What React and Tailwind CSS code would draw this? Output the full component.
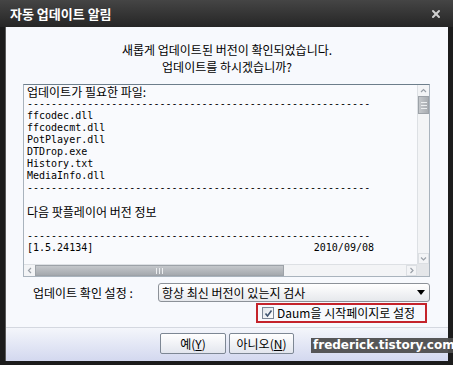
import { X } from 'lucide-react';

const files = ['ffcodec.dll', 'ffcodecmt.dll', 'PotPlayer.dll', 'DTDrop.exe', 'History.txt', 'MediaInfo.dll'];
const dashes = '-'.repeat(57);

function Dashes() {
  return <div className="h-[12px] whitespace-nowrap">{dashes}</div>;
}

function Chevron({ dir }) {
  const paths = {
    up: 'M2 6 L4.5 3.5 L7 6',
    down: 'M2 3.5 L4.5 6 L7 3.5',
    left: 'M6 2 L3.5 4.5 L6 7',
    right: 'M3.5 2 L6 4.5 L3.5 7',
  };
  return (
    <svg width="9" height="9" viewBox="0 0 9 9">
      <path d={paths[dir]} fill="none" stroke="#9aa0a8" strokeWidth="1.2" />
    </svg>
  );
}

function NavButton({ label, mnemonic, width }) {
  return (
    <button
      type="button"
      className={`flex h-[21px] ${width} items-center justify-center rounded-[2px] border border-[#7d8794] bg-linear-to-b from-white to-[#e3e6ee] text-[12px] text-black`}
    >
      {label}(<span className="underline">{mnemonic}</span>)
    </button>
  );
}

export default function App() {
  return (
    <div className="relative flex h-[365px] w-[453px] flex-col overflow-hidden bg-[#1c1c1c] font-['Noto_Sans_CJK_KR',sans-serif]">
      {/* title bar */}
      <div className="flex h-[27px] items-center justify-between bg-linear-to-b from-[#454545] to-[#262626] pl-[10px] pr-[11px]">
        <span className="text-[13px] font-bold leading-none text-white">자동 업데이트 알림</span>
        <X size={12} strokeWidth={4} className="text-[#cfcfcf]" />
      </div>

      <div className="mx-[5px] flex h-[334px] flex-col border-l border-[#5a5a5a] bg-[#f7f9fd]">
        <div className="pt-[14px] text-center text-[12px] leading-[17px] text-black">
          <p>새롭게 업데이트된 버전이 확인되었습니다.</p>
          <p>업데이트를 하시겠습니까?</p>
        </div>

        {/* text box */}
        <div className="ml-[17px] mt-[9px] flex h-[193px] w-[407px] flex-col border border-[#a9b3bd] border-t-[#6d7e8b] bg-[#f9fafd]">
          <div className="flex min-h-0 flex-1">
            <div className="flex-1 pl-[3px] pt-[1px] font-['DejaVu_Sans_Mono','Noto_Sans_CJK_KR',monospace] text-[10px] leading-[12px] text-black">
              <div className="h-[12px] font-['Noto_Sans_CJK_KR',sans-serif] text-[12px] leading-[12px]">업데이트가 필요한 파일:</div>
              <Dashes />
              {files.map((f) => (
                <div key={f} className="h-[12px]">{f}</div>
              ))}
              <Dashes />
              <div className="h-[12px]" />
              <div className="h-[12px] font-['Noto_Sans_CJK_KR',sans-serif] text-[12px] leading-[12px]">다음 팟플레이어 버전 정보</div>
              <div className="h-[12px]" />
              <Dashes />
              <div className="flex h-[12px] w-[347px] justify-between">
                <span>[1.5.24134]</span>
                <span>2010/09/08</span>
              </div>
            </div>
            {/* vertical scrollbar */}
            <div className="flex w-[12px] flex-col border-l border-[#dde0e4] bg-[#f3f4f6]">
              <div className="flex h-[11px] items-center justify-center">
                <Chevron dir="up" />
              </div>
              <div className="flex h-[18px] flex-col items-center justify-center gap-[2px] border border-[#9da2a8] bg-linear-to-r from-[#c4c7cb] to-[#a9adb2]">
                <div className="h-px w-[6px] bg-[#eceef0]" />
                <div className="h-px w-[6px] bg-[#eceef0]" />
                <div className="h-px w-[6px] bg-[#eceef0]" />
              </div>
              <div className="flex-1" />
              <div className="flex h-[11px] items-center justify-center border border-[#dcdfe3]">
                <Chevron dir="down" />
              </div>
            </div>
          </div>
          {/* horizontal scrollbar */}
          <div className="flex h-[12px]">
            <div className="flex flex-1 border-t border-[#dde0e4] bg-[#f3f4f6]">
              <div className="flex w-[11px] items-center justify-center">
                <Chevron dir="left" />
              </div>
              <div className="flex w-[249px] items-center justify-center gap-[2px] border border-[#9da2a8] bg-linear-to-b from-[#c4c7cb] to-[#a5a9ae]">
                <div className="h-[6px] w-px bg-[#eceef0]" />
                <div className="h-[6px] w-px bg-[#eceef0]" />
                <div className="h-[6px] w-px bg-[#eceef0]" />
              </div>
              <div className="flex-1" />
              <div className="flex w-[11px] items-center justify-center border border-[#dcdfe3]">
                <Chevron dir="right" />
              </div>
            </div>
            <div className="w-[12px] bg-[#e4e6e9]" />
          </div>
        </div>

        {/* update check setting */}
        <div className="mt-[6px] flex h-[19px] items-center text-[12px] text-black">
          <span className="ml-[27px] w-[125px]">업데이트 확인 설정 :</span>
          <div className="flex h-[19px] w-[272px] items-center justify-between rounded-[3px] border border-[#8c9198] bg-linear-to-b from-white to-[#e6e8ec] pl-[3px] pr-[4px]">
            <span>항상 최신 버전이 있는지 검사</span>
            <svg width="8" height="5" viewBox="0 0 8 5">
              <path d="M0 0 H8 L4 5 Z" fill="#000" />
            </svg>
          </div>
        </div>

        {/* start page checkbox */}
        <div className="ml-[250px] mt-[1px] flex h-[20px] w-[171px] items-center gap-[3px] border-2 border-[#c4232b] pl-[4px] text-[12px] text-black">
          <div className="flex h-[12px] w-[12px] items-center justify-center border border-[#7c8796] bg-linear-to-br from-[#dfe4ea] to-white">
            <svg width="9" height="9" viewBox="0 0 9 9">
              <path d="M1.5 4.5 L3.5 7 L7.5 1.5" fill="none" stroke="#3f5470" strokeWidth="1.6" />
            </svg>
          </div>
          <span>Daum을 시작페이지로 설정</span>
        </div>

        {/* footer */}
        <div className="mt-[4px] flex flex-1 justify-center gap-[3px] border-t border-[#d4d8e0] bg-linear-to-b from-[#f4f6fb] to-[#d3d8ef] pt-[5px]">
          <NavButton label="예" mnemonic="Y" width="w-[66px]" />
          <NavButton label="아니오" mnemonic="N" width="w-[65px]" />
        </div>
      </div>

      {/* watermark */}
      <div className="absolute bottom-[12px] right-0 h-[15px] w-[142px] bg-[#4e4e4e]/95 pl-[2px] font-['DejaVu_Sans',sans-serif] text-[12px] font-bold leading-[15px] text-white">
        frederick.tistory.com
      </div>
    </div>
  );
}
